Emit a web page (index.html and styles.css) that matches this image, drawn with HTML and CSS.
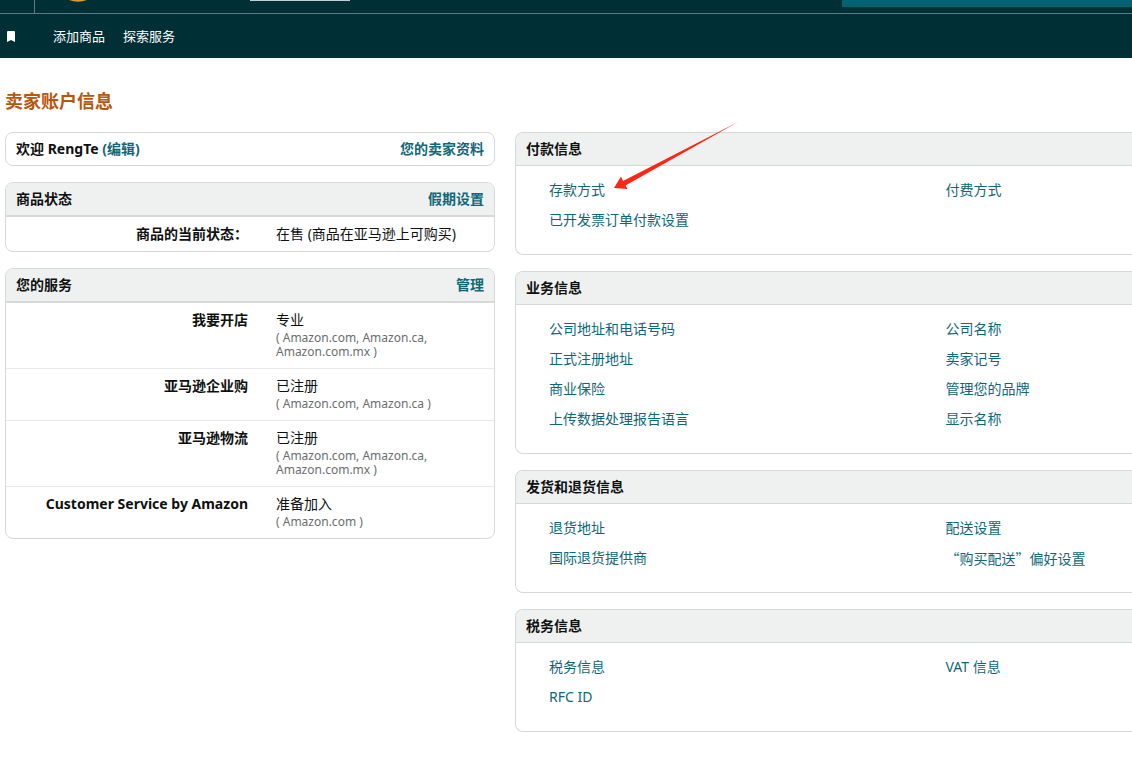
FILE: index.html
```html
<!DOCTYPE html>
<html lang="zh-CN">
<head>
  <meta charset="UTF-8">
  <meta name="viewport" content="width=device-width, initial-scale=1.0">
  <title>卖家账户信息</title>
  <link rel="stylesheet" href="styles.css">
</head>
<body>

  <header>
    <div class="topbar">
      <div class="menu-slot"></div>
      <div class="logo-slot">
        <svg width="20" height="3" viewBox="0 0 20 3"><path d="M1 0 Q10 3.4 19 0 Z" fill="#e09a33"/></svg>
      </div>
      <div class="account-box"></div>
      <div class="search-box"></div>
    </div>
    <nav class="navbar">
      <svg class="bookmark" width="8" height="11" viewBox="0 0 8 11"><path d="M1 0H7Q8 0 8 1V11L4 9L0 11V1Q0 0 1 0Z" fill="#fff"/></svg>
      <a href="#">添加商品</a>
      <a href="#">探索服务</a>
    </nav>
  </header>

  <main>
    <h1>卖家账户信息</h1>

    <div class="columns">
      <!-- left column -->
      <div class="side">
        <section class="card">
          <div class="card-head plain">
            <h2>欢迎 RengTe <a href="#">(编辑)</a></h2>
            <a href="#">您的卖家资料</a>
          </div>
        </section>

        <section class="card">
          <div class="card-head">
            <h2>商品状态</h2>
            <a href="#">假期设置</a>
          </div>
          <table>
            <tr>
              <th scope="row">商品的当前状态：</th>
              <td>在售 (商品在亚马逊上可购买)</td>
            </tr>
          </table>
        </section>

        <section class="card">
          <div class="card-head">
            <h2>您的服务</h2>
            <a href="#">管理</a>
          </div>
          <table class="services">
            <tr>
              <th scope="row">我要开店</th>
              <td>专业<small>( Amazon.com, Amazon.ca, Amazon.com.mx )</small></td>
            </tr>
            <tr>
              <th scope="row">亚马逊企业购</th>
              <td>已注册<small>( Amazon.com, Amazon.ca )</small></td>
            </tr>
            <tr>
              <th scope="row">亚马逊物流</th>
              <td>已注册<small>( Amazon.com, Amazon.ca, Amazon.com.mx )</small></td>
            </tr>
            <tr>
              <th scope="row">Customer Service by Amazon</th>
              <td>准备加入<small>( Amazon.com )</small></td>
            </tr>
          </table>
        </section>
      </div>

      <!-- right column -->
      <div class="content">
        <section class="card">
          <div class="card-head"><h2>付款信息</h2></div>
          <ul class="links">
            <li class="marked">
              <a href="#">存款方式</a>
              <svg class="arrow" width="126" height="70" viewBox="0 0 126 70"><path d="M1 67L8 55.500L10 60L125 1L12.500 64.500L14.500 68Z" fill="#fa2616"/></svg>
            </li>
            <li><a href="#">付费方式</a></li>
            <li><a href="#">已开发票订单付款设置</a></li>
          </ul>
        </section>

        <section class="card">
          <div class="card-head"><h2>业务信息</h2></div>
          <ul class="links">
            <li><a href="#">公司地址和电话号码</a></li>
            <li><a href="#">公司名称</a></li>
            <li><a href="#">正式注册地址</a></li>
            <li><a href="#">卖家记号</a></li>
            <li><a href="#">商业保险</a></li>
            <li><a href="#">管理您的品牌</a></li>
            <li><a href="#">上传数据处理报告语言</a></li>
            <li><a href="#">显示名称</a></li>
          </ul>
        </section>

        <section class="card">
          <div class="card-head"><h2>发货和退货信息</h2></div>
          <ul class="links">
            <li><a href="#">退货地址</a></li>
            <li><a href="#">配送设置</a></li>
            <li><a href="#">国际退货提供商</a></li>
            <li class="cjk"><a href="#">“购买配送”偏好设置</a></li>
          </ul>
        </section>

        <section class="card">
          <div class="card-head"><h2>税务信息</h2></div>
          <ul class="links">
            <li><a href="#">税务信息</a></li>
            <li><a href="#">VAT 信息</a></li>
            <li><a href="#">RFC ID</a></li>
          </ul>
        </section>
      </div>
    </div>
  </main>

</body>
</html>
```
FILE: styles.css
```css
* { box-sizing: border-box; }

body {
  margin: 0;
  background: #fff;
  color: #0f1111;
  font-family: "Noto Sans", "Noto Sans CJK SC", sans-serif;
  font-size: 14px;
  line-height: 20px;
}

a { color: #0f6878; text-decoration: none; }
a:hover { text-decoration: underline; }

/* header */
header { background: #002f36; }

.topbar {
  display: flex;
  align-items: flex-start;
  height: 14px;
  border-bottom: 1px solid #5d7b80;
}
.menu-slot {
  width: 35px;
  height: 13px;
  border-right: 1px solid #5d7b80;
}
.logo-slot {
  display: flex;
  width: 215px;
  padding-left: 33px;
}
.account-box {
  width: 100px;
  height: 1px;
  background: #c3d0d2;
}
.search-box {
  width: 290px;
  height: 7px;
  margin-left: auto;
  background: #006170;
}

.navbar {
  display: flex;
  align-items: center;
  gap: 18px;
  height: 44px;
  padding-left: 7px;
  font-size: 13px;
}
.navbar a { color: #fff; }
.bookmark { margin-right: 20px; }

/* page */
main { padding: 30px 0 24px 5px; }

h1 {
  margin: 0 0 18px;
  color: #b9560c;
  font-size: 18px;
  line-height: 26px;
}

h2 {
  margin: 0;
  font-size: 14px;
  line-height: 20px;
}

.columns {
  display: flex;
  align-items: flex-start;
  gap: 20px;
}
.side, .content {
  display: flex;
  flex-direction: column;
  gap: 16px;
}
.side { width: 490px; flex-shrink: 0; }
.content { flex: 1; }

.card {
  border: 1px solid #d5d9d9;
  border-radius: 8px;
}
.content .card {
  border-right: 0;
  border-radius: 8px 0 0 8px;
}

.card-head {
  display: flex;
  justify-content: space-between;
  padding: 6px 10px;
  background: #eff1f1;
  border-bottom: 1px solid #d5d9d9;
  border-radius: 7px 7px 0 0;
  font-weight: bold;
}
.side .card-head { border-bottom-width: 2px; }
.content .card-head { border-radius: 7px 0 0 0; }
.side .card-head.plain {
  background: none;
  border-bottom: 0;
}

/* label / value rows */
table {
  width: 100%;
  border-collapse: collapse;
  line-height: 21px;
}
th, td {
  padding: 6px 0 7px;
  vertical-align: top;
}
th {
  width: 242px;
  text-align: right;
}
td { padding-left: 28px; padding-right: 30px; text-align: left; }

.services td { padding-bottom: 9px; }
.services tr + tr { border-top: 1px solid #e7e9e9; }

small {
  display: block;
  margin-top: 1px;
  color: #6a6e6e;
  font-size: 12px;
  line-height: 14px;
}

/* link lists */
.links {
  display: grid;
  grid-template-columns: 68% 1fr;
  margin: 0;
  padding: 9px 0 19px 33px;
  list-style: none;
  line-height: 30px;
}
.cjk { font-family: "Noto Sans CJK SC", sans-serif; }

.marked { position: relative; }
.arrow {
  position: absolute;
  left: 64px;
  bottom: 14px;
}
```
